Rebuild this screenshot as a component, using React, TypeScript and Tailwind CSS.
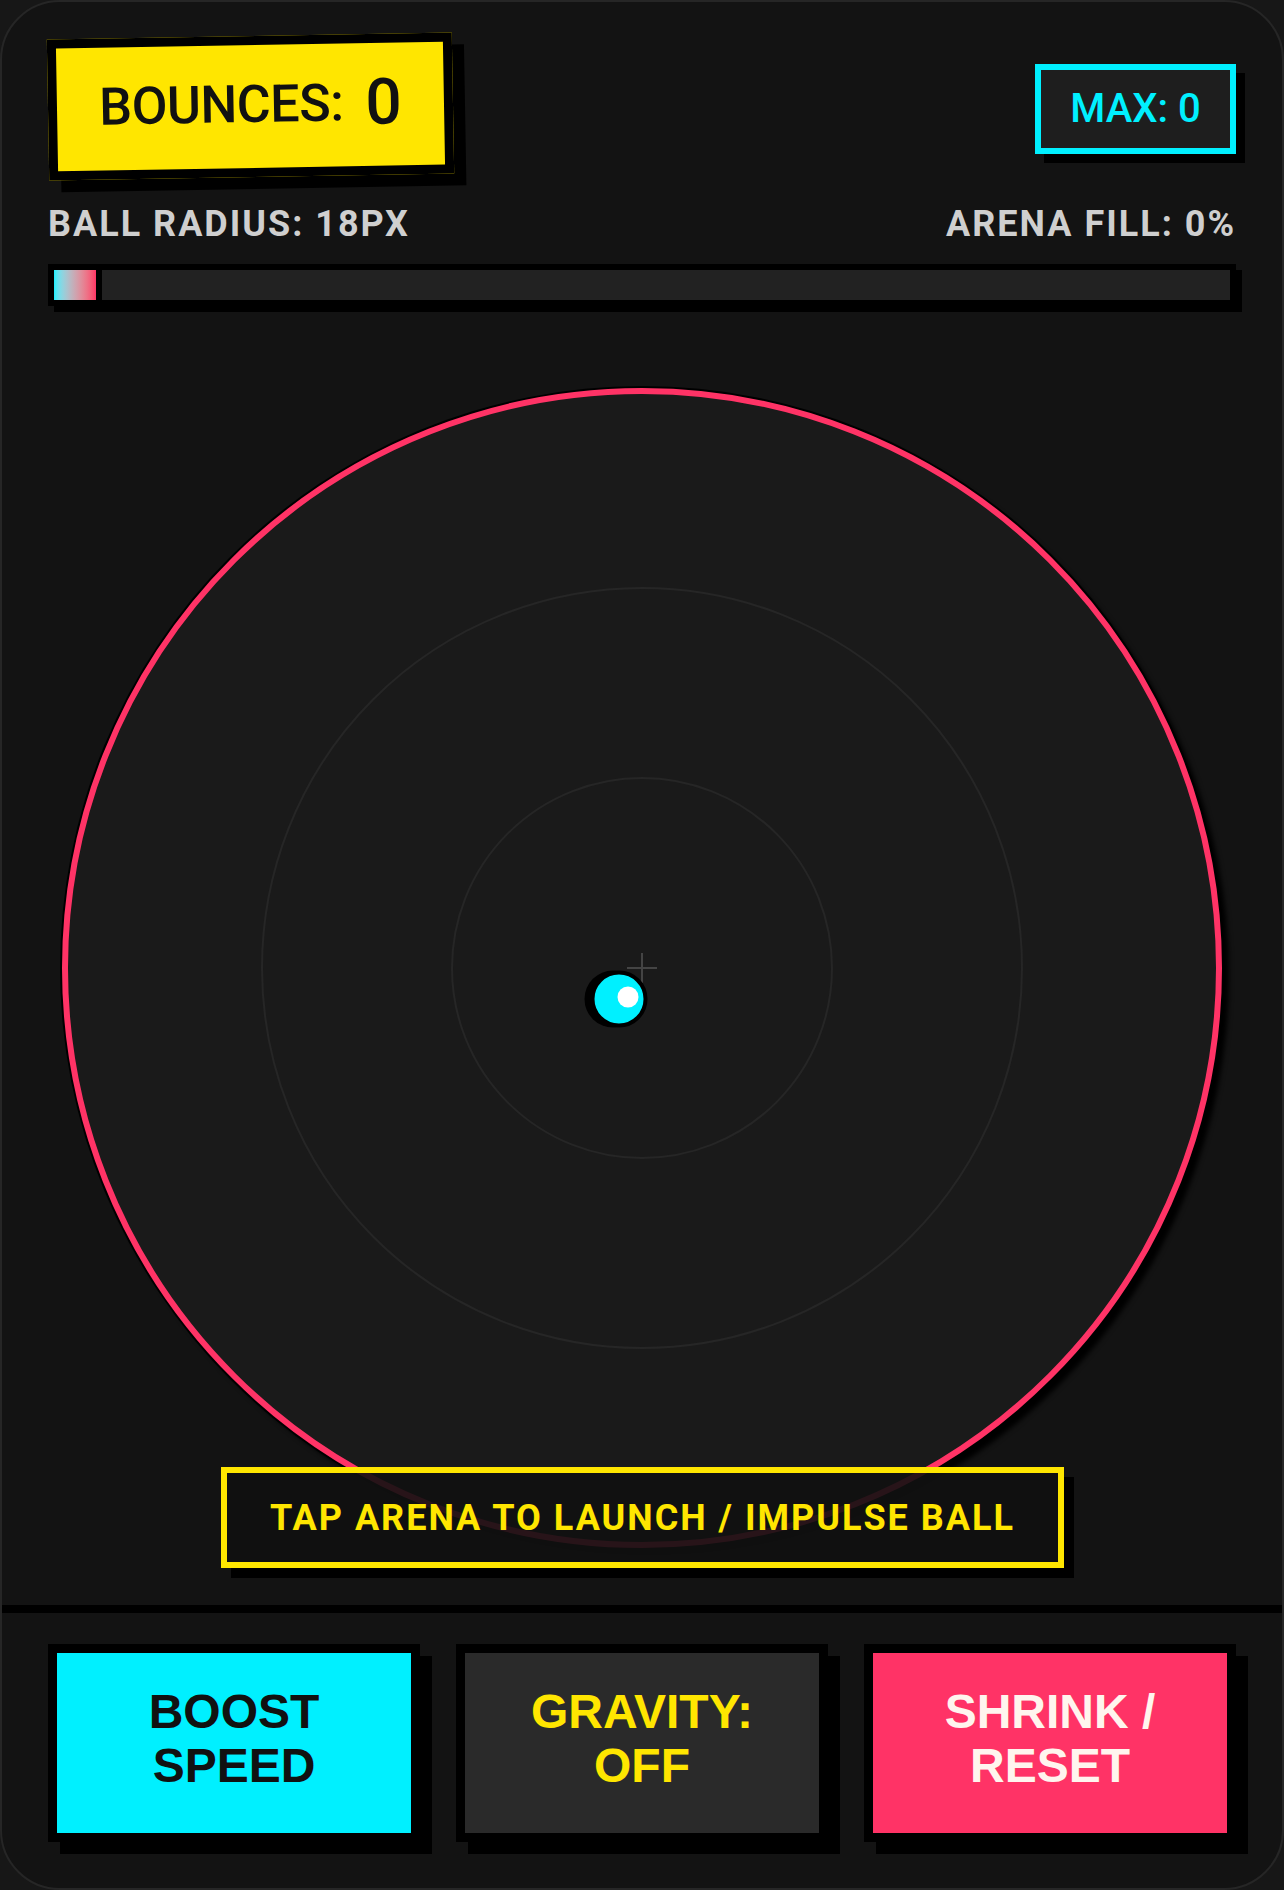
const roboto = "font-['Roboto',Arial,sans-serif]";
const arial = "font-['Liberation_Sans',Arial,sans-serif]";

function Header() {
  return (
    <div className="flex flex-col px-[46px] pt-[34px]">
      <div className="flex items-center justify-between">
        <div className="flex h-[141px] w-[405px] -rotate-1 items-center justify-center gap-[22px] border-[9px] border-black bg-[#ffe600] pb-[4px] text-[#111] shadow-[12px_12px_0_#000]">
          <span className={`${roboto} text-[52px] font-medium leading-none tracking-[-0.5px]`}>BOUNCES:</span>
          <span className={`${roboto} text-[64px] font-medium leading-none`}>0</span>
        </div>
        <div
          className={`${roboto} mt-[4px] flex h-[90px] w-[201px] items-center justify-center border-[6px] border-[#00f0ff] bg-[#1e1e1e] text-[40px] font-medium leading-none text-[#00f0ff] shadow-[9px_9px_0_#000]`}
        >
          MAX: 0
        </div>
      </div>

      <div
        className={`${roboto} mt-[29px] flex justify-between text-[36px] font-bold leading-none tracking-[2px] text-[#cfcfcf]`}
      >
        <span>BALL RADIUS: 18PX</span>
        <span>ARENA FILL: 0%</span>
      </div>

      <div className="mt-[22px] flex h-[42px] border-[6px] border-black bg-[#222222] shadow-[6px_6px_0_#000]">
        <div className="h-full w-[48px] border-r-[6px] border-black bg-linear-to-r from-[#00f0ff] to-[#ff3366]" />
      </div>
    </div>
  );
}

function Arena() {
  return (
    <div className="relative flex flex-1 flex-col items-center">
      <div className="relative mt-[82px] flex h-[1160px] w-[1160px] shrink-0 items-center justify-center rounded-full border-[6px] border-[#ff3366] bg-[#1a1a1a] shadow-[0_0_0_2px_#000,7px_7px_5px_#000]">
        <div className="flex h-[762px] w-[762px] items-center justify-center rounded-full border-2 border-[#262626]">
          <div className="h-[382px] w-[382px] rounded-full border-2 border-[#262626]" />
        </div>

        {/* crosshair at arena centre */}
        <div className="absolute left-1/2 top-1/2 h-[2px] w-[30px] -translate-x-1/2 -translate-y-1/2 bg-[#444]" />
        <div className="absolute left-1/2 top-1/2 h-[30px] w-[2px] -translate-x-1/2 -translate-y-1/2 bg-[#444]" />

        {/* ball */}
        <div className="absolute left-[calc(50%-23.5px)] top-[calc(50%+31px)] flex h-[57px] w-[57px] -translate-x-1/2 -translate-y-1/2 items-center justify-center rounded-full border-4 border-black bg-[#00f0ff] shadow-[-6px_0_0_#000]">
          <div className="ml-[19px] mt-[-4px] h-[21px] w-[21px] rounded-full bg-white" />
        </div>
      </div>

      <div
        className={`${roboto} absolute bottom-[37px] left-[219px] flex h-[101px] w-[843px] items-center justify-center border-[6px] border-[#ffe600] bg-[#111111]/90 text-[36px] font-bold leading-none tracking-[2px] text-[#ffe600] shadow-[10px_10px_0_#000]`}
      >
        TAP ARENA TO LAUNCH / IMPULSE BALL
      </div>
    </div>
  );
}

function Controls() {
  const base = `${arial} flex h-[198px] flex-col items-center justify-center border-[9px] border-black pb-[9px] text-center text-[48px] font-bold leading-[54px] shadow-[12px_12px_0_#000]`;
  return (
    <div className="grid grid-cols-3 gap-[36px] border-t-[8px] border-black px-[46px] pb-[46px] pt-[31px]">
      <button className={`${base} bg-[#00f0ff] text-[#111]`}>
        BOOST
        <br />
        SPEED
      </button>
      <button className={`${base} bg-[#2a2a2a] text-[#ffe600]`}>
        GRAVITY:
        <br />
        OFF
      </button>
      <button className={`${base} bg-[#ff3366] text-[#fff5ee]`}>
        SHRINK /
        <br />
        RESET
      </button>
    </div>
  );
}

export default function App() {
  return (
    <div className="min-h-screen bg-[#171717]">
      <div className="flex h-[1890px] flex-col overflow-hidden rounded-[60px] border-2 border-[#262626] bg-[#131313]">
        <Header />
        <Arena />
        <Controls />
      </div>
    </div>
  );
}
